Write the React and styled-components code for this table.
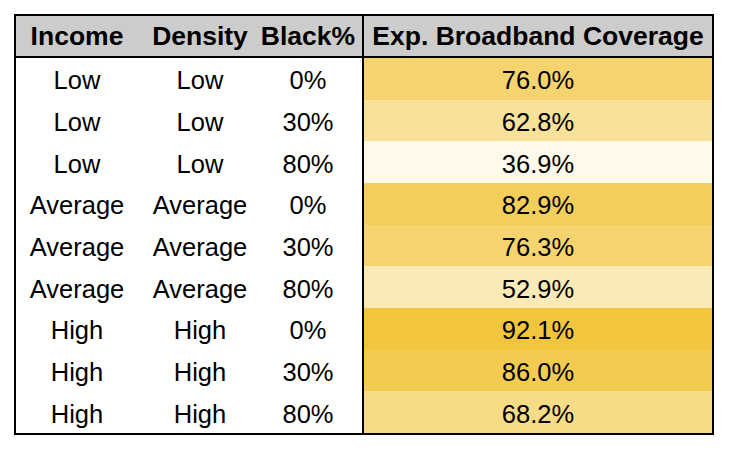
import React from "react";
import styled, { createGlobalStyle } from "styled-components";

const Global = createGlobalStyle`
  html, body { margin: 0; padding: 0; background: #ffffff; }
  body { font-family: "Liberation Sans", Arial, sans-serif; color: #000; }
`;

const Page = styled.div`
  padding: 14px;
  width: 732px;
  height: 458px;
  box-sizing: border-box;
`;

const Table = styled.div`
  display: grid;
  grid-template-columns: 122px 124px 100px 350px;
  grid-template-rows: 42px repeat(9, 41.667px);
  width: 700px;
  border: 2px solid #000;
  box-sizing: border-box;
`;

const HeadCell = styled.div`
  display: flex;
  align-items: center;
  justify-content: center;
  background: #cccccc;
  border-bottom: 2px solid #000;
  border-left: ${(p) => (p.$split ? "2px solid #000" : "none")};
  padding-right: ${(p) => (p.$pr ? p.$pr : 0)}px;
  font-size: 26.5px;
  font-weight: bold;
  white-space: nowrap;
  box-sizing: border-box;
`;

const Cell = styled.div`
  display: flex;
  align-items: center;
  justify-content: center;
  padding-top: 4px;
  padding-right: ${(p) => (p.$pr ? p.$pr : 0)}px;
  font-size: 25.5px;
  white-space: nowrap;
  box-sizing: border-box;
`;

const ValueCell = styled(Cell)`
  border-left: 2px solid #000;
  background: ${(p) => p.$bg};
`;

const rows = [
  ["Low", "Low", "0%", 76.0],
  ["Low", "Low", "30%", 62.8],
  ["Low", "Low", "80%", 36.9],
  ["Average", "Average", "0%", 82.9],
  ["Average", "Average", "30%", 76.3],
  ["Average", "Average", "80%", 52.9],
  ["High", "High", "0%", 92.1],
  ["High", "High", "30%", 86.0],
  ["High", "High", "80%", 68.2],
];

function scaleColor(v) {
  const min = 30;
  const max = 95.8;
  const t = Math.max(0, Math.min(1, (v - min) / (max - min)));
  const end = [241, 194, 50];
  const c = end.map((e) => Math.round(255 - t * (255 - e)));
  return `rgb(${c[0]}, ${c[1]}, ${c[2]})`;
}

export default function App() {
  return (
    <Page>
      <Global />
      <Table>
        <HeadCell>Income</HeadCell>
        <HeadCell>Density</HeadCell>
        <HeadCell $pr={8}>Black%</HeadCell>
        <HeadCell $split>Exp. Broadband Coverage</HeadCell>
        {rows.map(([inc, den, blk, val], i) => (
          <React.Fragment key={i}>
            <Cell>{inc}</Cell>
            <Cell>{den}</Cell>
            <Cell $pr={8}>{blk}</Cell>
            <ValueCell $bg={scaleColor(val)}>{val.toFixed(1)}%</ValueCell>
          </React.Fragment>
        ))}
      </Table>
    </Page>
  );
}
